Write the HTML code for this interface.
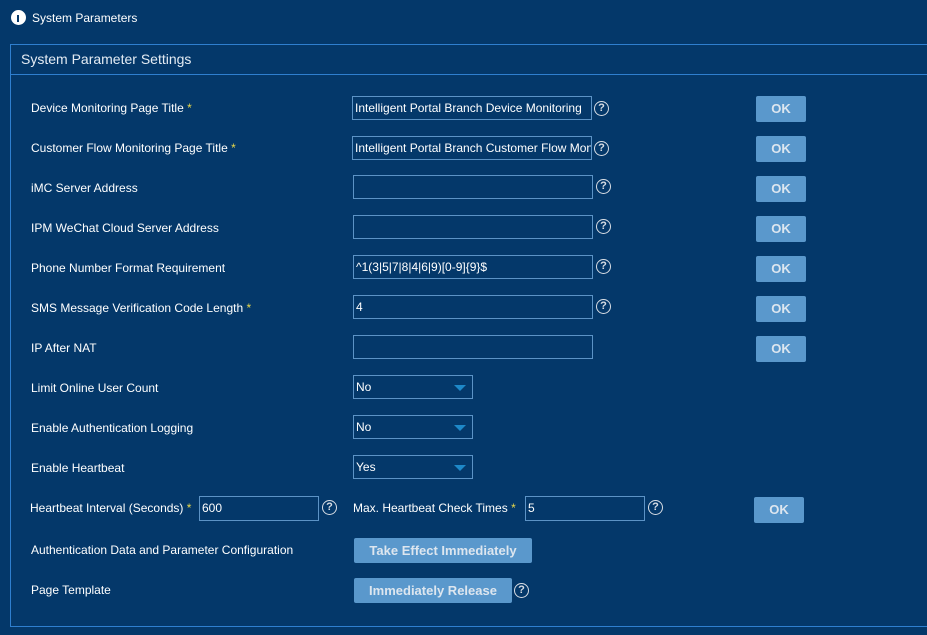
<!DOCTYPE html>
<html><head><meta charset="utf-8"><style>
body{margin:0;width:927px;height:635px;background:#04386a;font-family:"Liberation Sans",sans-serif;color:#fff;position:relative;overflow:hidden}
.a{position:absolute;white-space:nowrap}
.l{font-size:12px;left:31px}
.s{color:#e8d84a}
.in{position:absolute;border:1px solid #5c93c6;height:22px;box-sizing:border-box;height:24px;font-size:12px;line-height:22px;padding-left:2px;overflow:hidden;white-space:nowrap}
.ok{position:absolute;background:#5a98cc;color:#dde6ef;font-weight:bold;font-size:13px;text-align:center;border-radius:2px}
.q{position:absolute;width:13px;height:13px;border:1.5px solid #d8dde4;border-radius:50%;font-size:11px;font-weight:bold;text-align:center;line-height:13px;color:#d8dde4}
.dd:after{content:"";position:absolute;right:6px;top:9px;border-left:6px solid transparent;border-right:6px solid transparent;border-top:6px solid #1e88c8}
</style></head><body>
<div class="a" style="left:11px;top:10px;width:15px;height:15px;border-radius:50%;background:#fff"></div>
<div class="a" style="left:17px;top:15px;width:2px;height:7px;background:#04386a"></div>
<div class="a" style="left:32px;top:11px;font-size:12px">System Parameters</div>
<div class="a" style="left:10px;top:44px;width:930px;height:581px;border:1px solid #2f7fcf"></div>
<div class="a" style="left:11px;top:74px;width:930px;height:1px;background:#2f7fcf"></div>
<div class="a" style="left:21px;top:51px;font-size:14px;color:#e4ecf4">System Parameter Settings</div>

<div class="a l" style="top:101px">Device Monitoring Page Title <span class="s">*</span></div>
<div class="in" style="left:352px;top:96px;width:240px">Intelligent Portal Branch Device Monitoring</div>
<div class="q" style="left:594px;top:101px">?</div>
<div class="ok" style="left:756px;top:96px;width:50px;height:26px;line-height:26px">OK</div>

<div class="a l" style="top:141px">Customer Flow Monitoring Page Title <span class="s">*</span></div>
<div class="in" style="left:352px;top:136px;width:240px">Intelligent Portal Branch Customer Flow Monitoring</div>
<div class="q" style="left:594px;top:141px">?</div>
<div class="ok" style="left:756px;top:136px;width:50px;height:26px;line-height:26px">OK</div>

<div class="a l" style="top:181px">iMC Server Address</div>
<div class="in" style="left:353px;top:175px;width:240px"></div>
<div class="q" style="left:596px;top:179px">?</div>
<div class="ok" style="left:756px;top:176px;width:50px;height:26px;line-height:26px">OK</div>

<div class="a l" style="top:221px">IPM WeChat Cloud Server Address</div>
<div class="in" style="left:353px;top:215px;width:240px"></div>
<div class="q" style="left:596px;top:219px">?</div>
<div class="ok" style="left:756px;top:216px;width:50px;height:26px;line-height:26px">OK</div>

<div class="a l" style="top:261px">Phone Number Format Requirement</div>
<div class="in" style="left:353px;top:255px;width:240px">^1(3|5|7|8|4|6|9)[0-9]{9}$</div>
<div class="q" style="left:596px;top:259px">?</div>
<div class="ok" style="left:756px;top:256px;width:50px;height:26px;line-height:26px">OK</div>

<div class="a l" style="top:301px">SMS Message Verification Code Length <span class="s">*</span></div>
<div class="in" style="left:353px;top:295px;width:240px">4</div>
<div class="q" style="left:596px;top:299px">?</div>
<div class="ok" style="left:756px;top:296px;width:50px;height:26px;line-height:26px">OK</div>

<div class="a l" style="top:341px">IP After NAT</div>
<div class="in" style="left:353px;top:335px;width:240px"></div>
<div class="ok" style="left:756px;top:336px;width:50px;height:26px;line-height:26px">OK</div>

<div class="a l" style="top:381px">Limit Online User Count</div>
<div class="in dd" style="left:353px;top:375px;width:120px">No</div>
<div class="a l" style="top:421px">Enable Authentication Logging</div>
<div class="in dd" style="left:353px;top:415px;width:120px">No</div>
<div class="a l" style="top:461px">Enable Heartbeat</div>
<div class="in dd" style="left:353px;top:455px;width:120px">Yes</div>

<div class="a" style="left:30px;top:501px;font-size:12px">Heartbeat Interval (Seconds) <span class="s">*</span></div>
<div class="in" style="left:199px;top:496px;width:120px;height:25px">600</div>
<div class="q" style="left:322px;top:500px">?</div>
<div class="a" style="left:353px;top:501px;font-size:12px">Max. Heartbeat Check Times <span class="s">*</span></div>
<div class="in" style="left:525px;top:496px;width:120px;height:25px">5</div>
<div class="q" style="left:648px;top:500px">?</div>
<div class="ok" style="left:754px;top:497px;width:50px;height:26px;line-height:26px">OK</div>

<div class="a l" style="top:543px">Authentication Data and Parameter Configuration</div>
<div class="ok" style="left:354px;top:538px;width:178px;height:25px;line-height:25px">Take Effect Immediately</div>
<div class="a l" style="top:583px">Page Template</div>
<div class="ok" style="left:354px;top:578px;width:158px;height:25px;line-height:25px">Immediately Release</div>
<div class="q" style="left:514px;top:583px">?</div>
</body></html>
